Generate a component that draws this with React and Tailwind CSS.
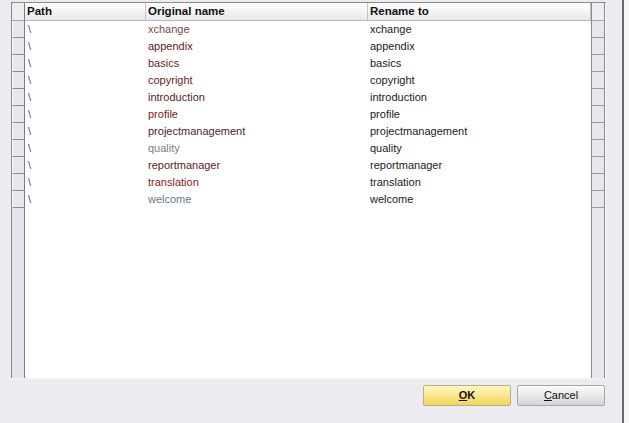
import React from "react";

const rows = [
  { o: "xchange", oc: "text-[#7a4848]", r: "xchange" },
  { o: "appendix", oc: "text-[#5e2020]", r: "appendix" },
  { o: "basics", oc: "text-[#6e1a1a]", r: "basics" },
  { o: "copyright", oc: "text-[#6e1a1a]", r: "copyright" },
  { o: "introduction", oc: "text-[#561a1a]", r: "introduction" },
  { o: "profile", oc: "text-[#7a1a1a]", r: "profile" },
  { o: "projectmanagement", oc: "text-[#452828]", r: "projectmanagement" },
  { o: "quality", oc: "text-[#7c7c7c]", r: "quality" },
  { o: "reportmanager", oc: "text-[#561c1c]", r: "reportmanager" },
  { o: "translation", oc: "text-[#8e1a2a]", r: "translation" },
  { o: "welcome", oc: "text-[#6a7888]", r: "welcome" },
];

export default function App() {
  return (
    <div
      className="w-[629px] h-[423px] flex flex-row bg-[#ecebf2] overflow-hidden text-[11px] leading-[17px] text-[#1a1a1a]"
      style={{ fontFamily: '"Liberation Sans", Arial, sans-serif' }}
    >
      <div className="w-[622px] flex flex-col">
        <div className="h-[2px]" />
        <div className="ml-[11px] w-[595px] h-[376px] flex flex-row border-t border-l border-[#8a8a8a] bg-white">
          {/* left row header column */}
          <div className="w-[13px] flex flex-col bg-[#e3e3ea] border-r border-[#7d7d7d]">
            <div className="h-[18px] border-b border-[#a8a8a8] bg-[#ededf2]" />
            {rows.map((_, i) => (
              <div key={i} className="h-[17px] border-b border-[#8e8e8e] border-l border-l-white bg-[#e6e6ec]" />
            ))}
          </div>
          {/* main data */}
          <div className="w-[566px] flex flex-col">
            <div className="h-[18px] flex flex-row border-b border-[#b8b8b8] bg-gradient-to-b from-white to-[#e9e9ec] font-bold text-[11.5px] text-[#111]">
              <div className="w-[121px] pl-[2px] border-r border-[#c4c4c4] leading-[17px]">Path</div>
              <div className="w-[222px] pl-[2px] border-r border-[#c4c4c4] leading-[17px]">Original name</div>
              <div className="w-[223px] pl-[2px] border-r border-[#c4c4c4] leading-[17px]">Rename to</div>
            </div>
            {rows.map((row, i) => (
              <div key={i} className="h-[17px] flex flex-row">
                <div className="w-[121px] pl-[3px] text-[#555]">\</div>
                <div className={`w-[222px] pl-[2px] ${row.oc}`}>{row.o}</div>
                <div className="w-[223px] pl-[2px] text-[#1a1a1a]">{row.r}</div>
              </div>
            ))}
          </div>
          {/* right column */}
          <div className="w-[14px] flex flex-col bg-[#e6e6ec] border-l border-r border-[#8a8a8a]">
            <div className="h-[18px] border-b border-[#a8a8a8] bg-[#ededf2]" />
            {rows.map((_, i) => (
              <div key={i} className="h-[17px] border-b border-[#9a9a9a]" />
            ))}
          </div>
        </div>
        <div className="ml-[11px] w-[595px] h-[1px] bg-[#f6f6f8]" />
        <div className="flex flex-row justify-end gap-[6px] pr-[17px] pt-[6px]">
          <button className="w-[88px] h-[21px] rounded-[2px] border border-[#b5b08a] bg-gradient-to-b from-[#fff7c0] to-[#f3d552] text-[11px] font-bold text-[#111] flex items-center justify-center">
            <span className="underline">O</span>K
          </button>
          <button className="w-[88px] h-[21px] rounded-[2px] border border-[#a8a8a8] bg-gradient-to-b from-[#fbfbfb] to-[#d6d6d8] text-[11px] text-[#111] flex items-center justify-center">
            <span className="underline">C</span>ancel
          </button>
        </div>
      </div>
      <div className="w-[2px] bg-[#6a6a6e]" />
      <div className="flex-1 bg-[#f6f6f8]" />
    </div>
  );
}
